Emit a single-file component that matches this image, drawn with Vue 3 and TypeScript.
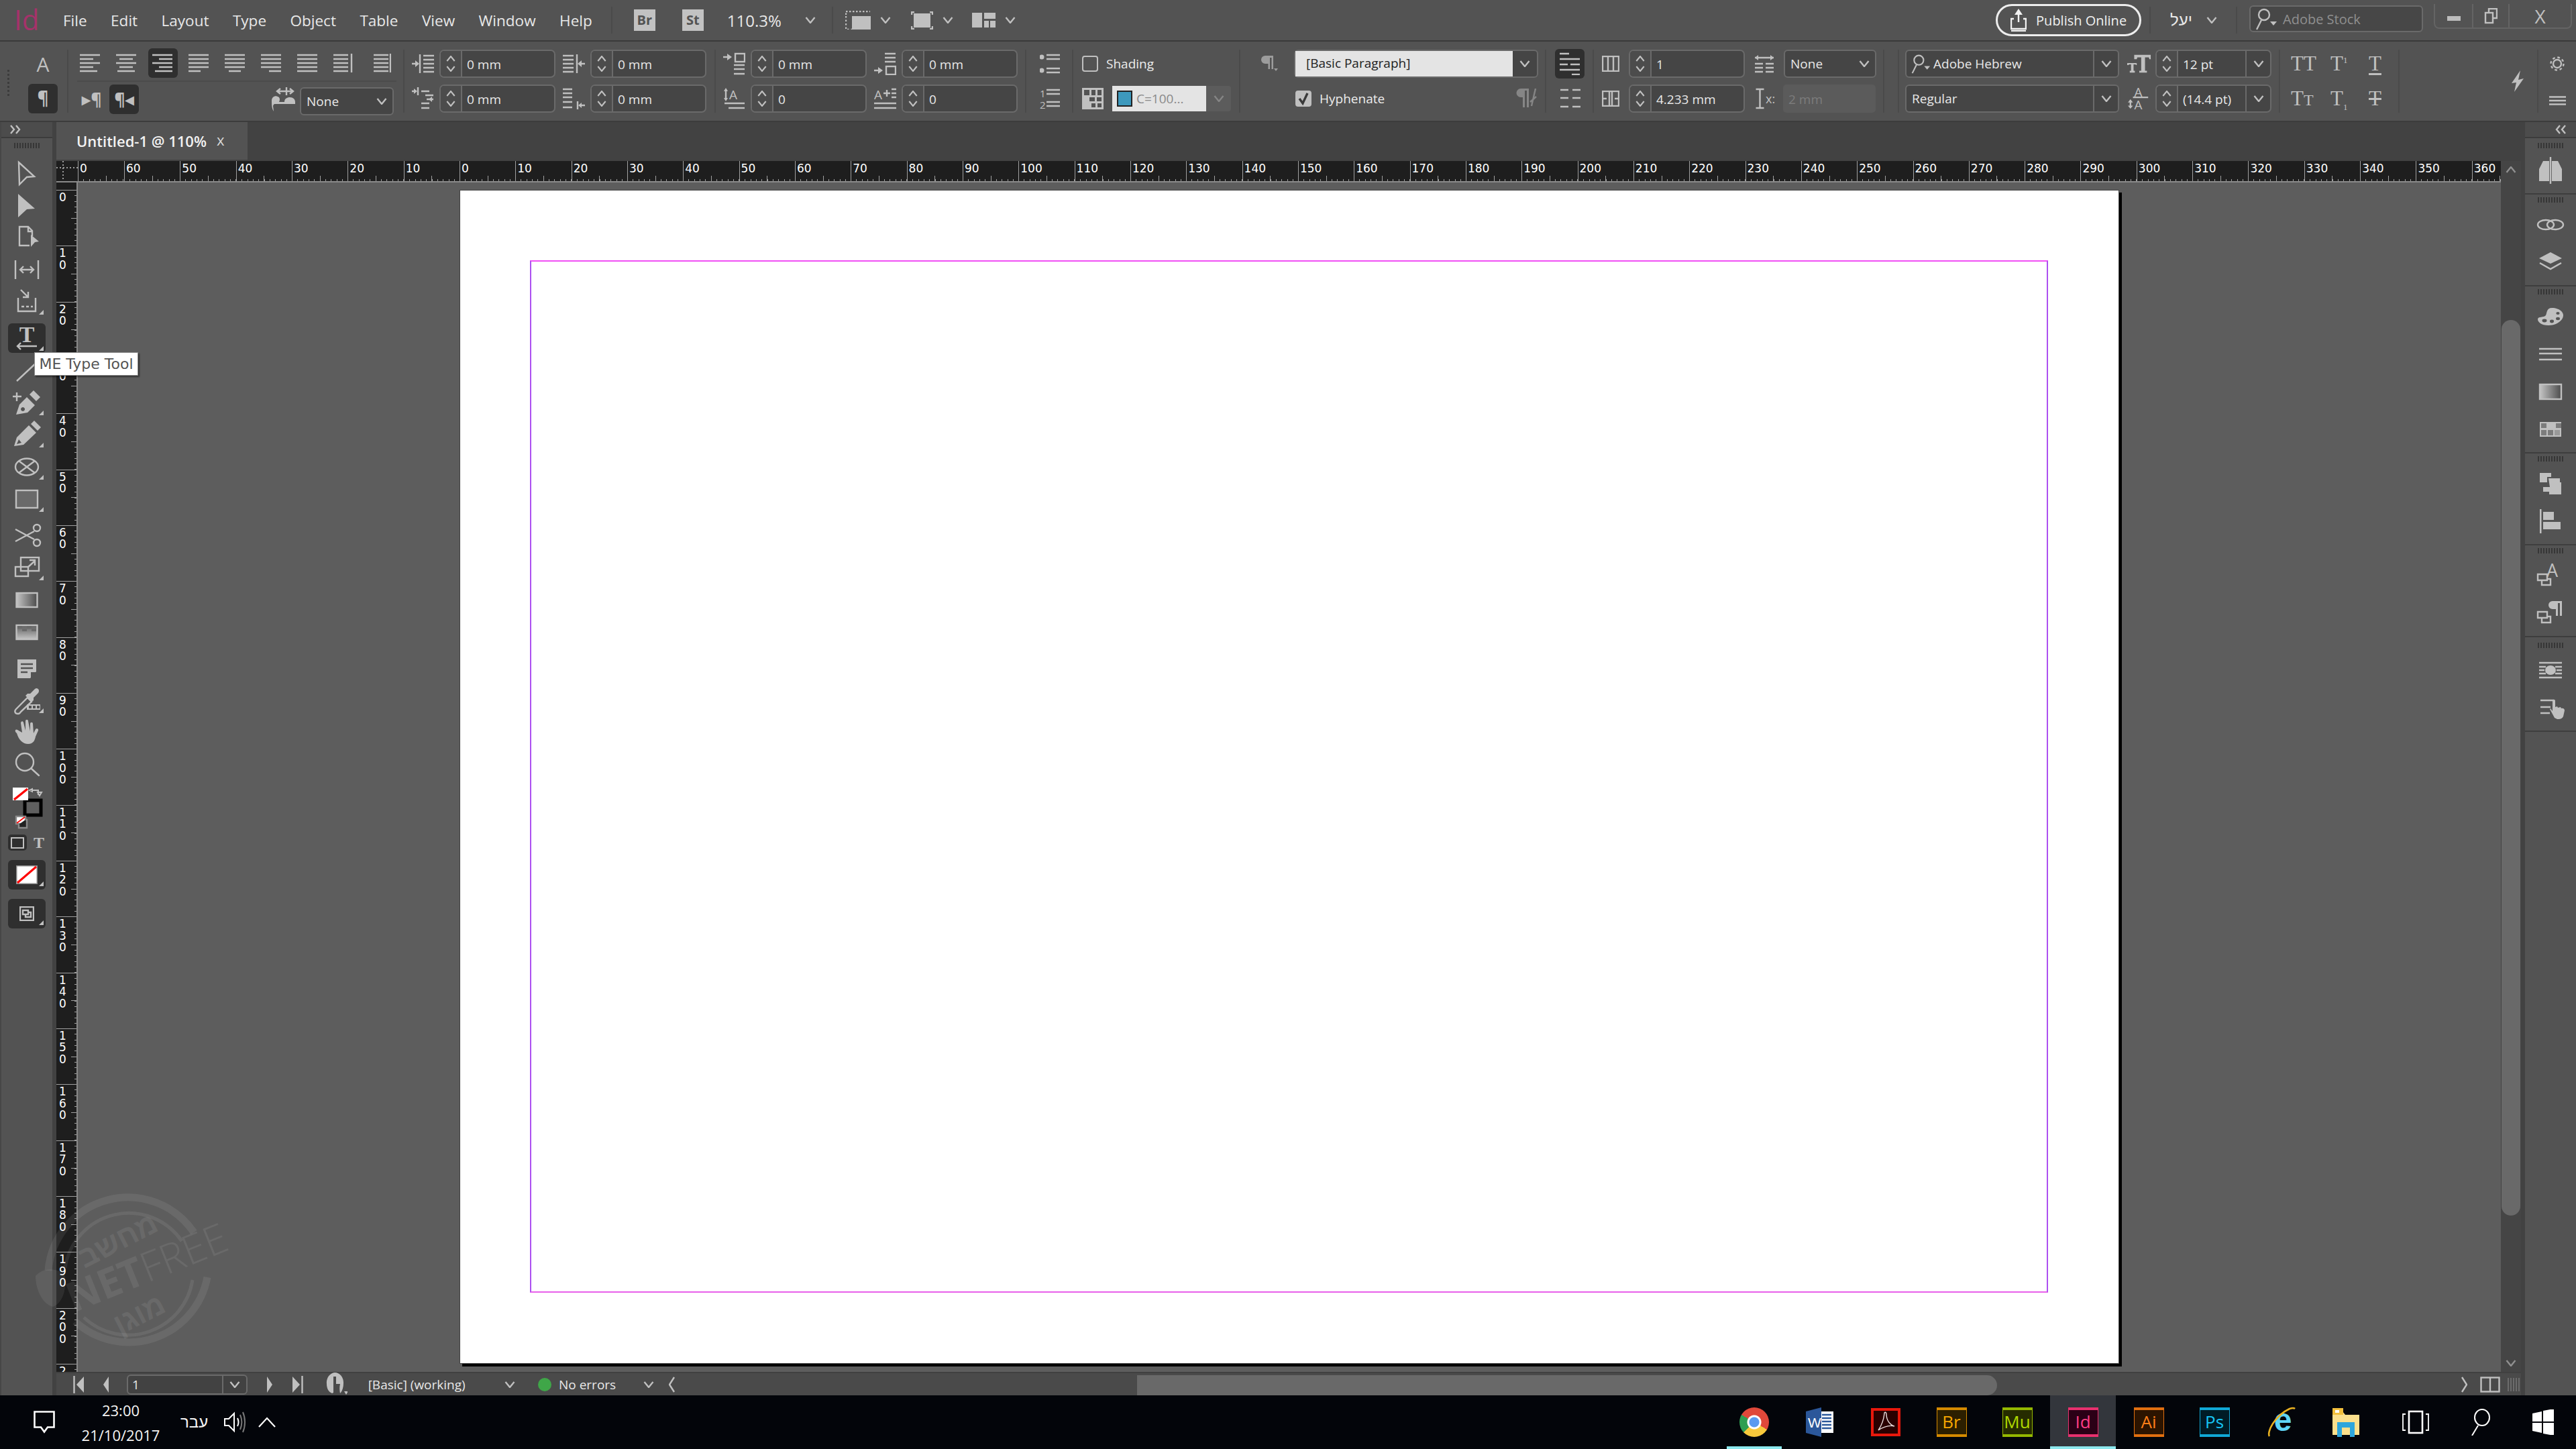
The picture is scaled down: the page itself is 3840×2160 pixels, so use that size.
<script setup lang="ts">
type Field = { icon: string; val: string; flip?: boolean; letterX?: number };
type Tool = { id: string; fly?: boolean; on?: boolean; gap?: boolean };

const menus = ["File", "Edit", "Layout", "Type", "Object", "Table", "View", "Window", "Help"];

const alignLines = [
  "M0 2h30M0 8h20M0 14h30M0 20h20M0 26h26",
  "M0 2h30M5 8h20M0 14h30M5 20h20M2 26h26",
  "M0 2h30M10 8h20M0 14h30M10 20h20M4 26h26",
  "M0 2h30M0 8h30M0 14h30M0 20h30M0 26h18",
  "M0 2h30M0 8h30M0 14h30M0 20h30M6 26h18",
  "M0 2h30M0 8h30M0 14h30M0 20h30M12 26h18",
  "M0 2h30M0 8h30M0 14h30M0 20h30M0 26h30",
  "M0 2h22M0 8h22M0 14h22M0 20h22M0 26h22M27 0v28",
  "M6 2h22M6 8h22M6 14h22M6 20h22M6 26h22M31 0v28",
];

const fieldsC: Field[] = [
  { icon: "ind-l", val: "0 mm" },
  { icon: "ind-l", val: "0 mm", flip: true },
  { icon: "ind-first", val: "0 mm" },
  { icon: "ind-last", val: "0 mm" },
];
const fieldsD: Field[] = [
  { icon: "sp-before", val: "0 mm" },
  { icon: "sp-after", val: "0 mm" },
  { icon: "dc-lines", val: "0", letterX: 9 },
  { icon: "dc-chars", val: "0", letterX: 0 },
];

const tools: Tool[] = [
  { id: "t-sel" },
  { id: "t-dir" },
  { id: "t-page" },
  { id: "t-gap" },
  { id: "t-coll", fly: true },
  { id: "t-type", fly: true, on: true, gap: true },
  { id: "t-line" },
  { id: "t-pen", fly: true },
  { id: "t-pencil", fly: true },
  { id: "t-frame", fly: true },
  { id: "t-rect", fly: true },
  { id: "t-sci", gap: true },
  { id: "t-free", fly: true },
  { id: "t-grad" },
  { id: "t-feather" },
  { id: "t-note", gap: true },
  { id: "t-drop", fly: true },
  { id: "t-hand" },
  { id: "t-zoom" },
];

const panelGroups = [
  ["r-pages"],
  ["r-links", "r-layers"],
  ["r-swatch", "r-stroke", "r-grad", "r-table"],
  ["r-path", "r-align"],
  ["r-cstyle", "r-pstyle"],
  ["r-wrap", "r-hand"],
];

const rulerNeg = [60, 50, 40, 30, 20, 10];
const rulerPos = Array.from({ length: 37 }, (_, i) => i * 10);
const rulerLeft = Array.from({ length: 22 }, (_, i) => i * 10);

const adobeApps = [
  { name: "Br", cls: "br" },
  { name: "Mu", cls: "mu" },
  { name: "Id", cls: "id" },
  { name: "Ai", cls: "ai" },
  { name: "Ps", cls: "ps" },
];
</script>

<template>
  <div class="app">
    <svg class="defs" aria-hidden="true">
      <defs>
        <linearGradient id="gr-h"><stop offset="0" stop-color="#c4c4c4" /><stop offset="1" stop-color="#4c4c4c" /></linearGradient>
        <linearGradient id="gr-v" x2="0" y2="1"><stop offset="0" stop-color="#5c5c5c" /><stop offset="1" stop-color="#c4c4c4" /></linearGradient>
      </defs>
      <symbol id="chev" viewBox="0 0 16 10"><path class="s" d="M1.5 1 8 9l6.5-8" /></symbol>
      <symbol id="chup" viewBox="0 0 16 10"><path class="s" d="M1.5 9 8 1l6.5 8" /></symbol>

      <symbol id="ind-l" viewBox="0 0 33 30"><path class="s" d="M12 1v28M17 3h16M17 9h16M17 15h16M17 21h16M17 27h16M0 15h6" /><path class="f" d="M5 10l6 5-6 5z" /></symbol>
      <symbol id="ind-first" viewBox="0 0 33 34"><path class="s" d="M9 0v12M0 6h4M14 6h12M20 12h12M22 18h10M14 24h12M14 31h12" /><path class="f" d="M3 2l5 4-5 4zM30 14v8l-5-4z" /></symbol>
      <symbol id="ind-last" viewBox="0 0 33 34"><path class="s" d="M0 3h14M0 9h14M0 15h14M0 22h14M0 30h14M22 21v12M27 27h6" /><path class="f" d="M28 23v8l-5-4z" /></symbol>
      <symbol id="sp-before" viewBox="0 0 33 34"><rect class="s" x="18" y="2" width="14" height="12" /><path class="s" d="M0 7h6M16 19h16M16 25h16M16 32h16" /><path class="f" d="M6 2l7 5-7 5z" /></symbol>
      <symbol id="sp-after" viewBox="0 0 33 34"><rect class="s" x="18" y="21" width="14" height="12" /><path class="s" d="M16 2h16M16 8h16M16 14h16M0 27h6" /><path class="f" d="M6 22l7 5-7 5z" /></symbol>
      <symbol id="dc-lines" viewBox="0 0 33 34"><path class="s" d="M4 3v16M2 24h30M8 31h24" /><path class="f" d="M1 6l3-5 3 5zM1 16h6l-3 5z" /></symbol>
      <symbol id="dc-chars" viewBox="0 0 33 34"><path class="s" d="M14 9h10M19 4v10M26 3h7M26 9h7M26 15h7M0 24h33M0 31h33" /></symbol>

      <symbol id="bullets" viewBox="0 0 30 30"><circle class="f" cx="3" cy="5" r="3.5" /><circle class="f" cx="3" cy="25" r="3.5" /><path class="s" d="M10 2h20M10 8h20M10 22h20M10 28h20" /></symbol>
      <symbol id="shade" viewBox="0 0 32 32"><path class="f" d="M0 0h32v32H0zM3 3v8h8V3zm11 0v8h6V3zm9 0v8h6V3zM11 14v6h8v-6zm11 0v6h7v-6zM14 23v6h6v-6zm9 0v6h6v-6z" fill-rule="evenodd" /></symbol>
      <symbol id="para-s" viewBox="0 0 27 24"><path class="f" d="M8 0h12v20h-2.500V3h-2.500v17h-2.500V12H8a6 6 0 0 1 0-12z" /><path class="f" d="M21 19h6l-3 4z" /></symbol>
      <symbol id="para-x" viewBox="0 0 33 30"><path class="f" d="M8 0h12v28h-3V3h-3v25h-3V13H8A6.500 6.500 0 0 1 8 0z" /><path class="s" d="M22 20l9-8M24 26l6-26" /></symbol>
      <symbol id="list-a" viewBox="0 0 30 34"><path class="s" d="M0 2h14M0 10h30M0 18h12M16 18h14M0 26h30M18 33h12" /></symbol>
      <symbol id="list-b" viewBox="0 0 30 30"><path class="s" d="M0 2h12M18 2h12M0 14h12M18 14h12M0 27h12M18 27h12" /></symbol>
      <symbol id="cols" viewBox="0 0 26 24"><rect class="s" x="1" y="1" width="24" height="22" /><path class="s" d="M9 1v22M17 1v22" /></symbol>
      <symbol id="gutter" viewBox="0 0 26 24"><rect class="s" x="1" y="1" width="24" height="22" /><path class="s" d="M11 1v22M15 1v22M1 12h6M19 12h6" /></symbol>
      <symbol id="bal" viewBox="0 0 30 28"><path class="s" d="M1 5h28M1 20h12M17 20h12M1 14h12M17 14h12M1 26h12M17 26h12" /><path class="f" d="M6 1v8l-5-4zM24 1v8l5-4z" /></symbol>
      <symbol id="mag" viewBox="0 0 34 34"><circle class="s" cx="14" cy="11" r="8" stroke-width="2" /><path class="s" d="M10 19 3 33" stroke-width="2" /><path class="f" d="M23 21h10l-5 6z" /></symbol>
      <symbol id="size" viewBox="0 0 38 28"><path class="f" d="M11 0h26v7h-2l-1-3h-6v21h3v3H19v-3h3V4h-6l-1 3h-4z" /><path class="f" d="M0 13h15v3h-1l-1-1h-3v10h2v3H4v-3h2V15H3l-1 1H0z" /></symbol>
      <symbol id="bolt" viewBox="0 0 20 32"><path class="f" d="M14 0 1 19l7-1-3 14L19 12l-8 2z" /></symbol>
      <symbol id="gear" viewBox="0 0 24 24"><circle class="s" cx="12" cy="12" r="6" stroke-width="4" /><circle class="s" cx="12" cy="12" r="9.500" stroke-width="3.500" stroke-dasharray="3.700 3.760" /></symbol>
      <symbol id="burger" viewBox="0 0 25 14"><path class="s" d="M0 1.500h25M0 7h25M0 12.500h25" stroke-width="2.600" /></symbol>

      <symbol id="scr" viewBox="0 0 38 28"><path class="s" stroke-dasharray="2.500 2.500" d="M1 6V1h36" /><path class="s" stroke-dasharray="2.500 3" d="M1 8v20h10" /><rect class="f" x="10" y="8" width="28" height="20" /></symbol>
      <symbol id="frame-m" viewBox="0 0 33 27"><path class="s" d="M5 1H1v4M28 1h4v4M5 26H1v-4M28 26h4v-4" stroke-width="1.800" /><rect class="f" x="4" y="3" width="25" height="21" /></symbol>
      <symbol id="arrange" viewBox="0 0 35 22"><path class="f" d="M0 0h15v22H0zM18 0h17v9H18zM18 12h7v10h-7zM27 12h8v10h-8z" /></symbol>
      <symbol id="upload" viewBox="0 0 24 34"><path class="s" d="M12 2v18M5 15h-4v15h22V15h-4" stroke-width="2" /><path class="f" d="M12 0l6 9H6z" /><path class="s" d="M1 33h22" /></symbol>
      <symbol id="restore" viewBox="0 0 20 24"><path class="s" d="M7 6V1h12v14h-5" stroke-width="3" /><rect class="s" x="2" y="7" width="11" height="15" stroke-width="3" /></symbol>

      <symbol id="first" viewBox="0 0 16 26"><path class="s" d="M1.500 0v26" stroke-width="3" /><path class="f" d="M16 1v24L5 13z" /></symbol>
      <symbol id="prev" viewBox="0 0 10 26"><path class="f" d="M9 1v24L1 13z" /></symbol>
      <symbol id="preflight" viewBox="0 0 32 36"><path class="f" fill-rule="evenodd" d="M13 0a13 15 0 0 1 13 16c0 7-2 12-5 15-1-5-1-10 0-14H15V6h-4v24l-2 1c-5-2-8-7-8-14A13 15 0 0 1 13 0z" /><path class="f" d="M27 28h6l-3 5z" /></symbol>
      <symbol id="split" viewBox="0 0 30 24"><rect class="s" x="1.500" y="1.500" width="27" height="21" stroke-width="3" /><path class="s" d="M15 1v22" stroke-width="2.400" /></symbol>

      <symbol id="t-sel" viewBox="0 0 48 48"><path class="s" d="M12 8l23 21-11 1-11 11z" /></symbol>
      <symbol id="t-dir" viewBox="0 0 48 48"><path class="f" d="M11 7l25 22-12 1-13 12z" /></symbol>
      <symbol id="t-page" viewBox="0 0 48 48"><path class="s" d="M32 22v-8l-6-6H13v28h15M26 8v7h6" /><path class="f" d="M30 20l12 10-6 1-6 7z" /></symbol>
      <symbol id="t-gap" viewBox="0 0 48 48"><path class="s" d="M7 10v28M41 10v28" stroke-width="4" /><path class="s" d="M14 24h20M19 19l-5 5 5 5M29 19l5 5-5 5" /></symbol>
      <symbol id="t-coll" viewBox="0 0 48 48"><path class="s" d="M11 18v20h26V18" stroke-width="3" /><path class="s" d="M16 31h4M23 31h4M30 31h3M15 6l10 10M26 9v8h-8" /></symbol>
      <symbol id="t-type" viewBox="0 0 48 48"><path class="s" d="M10 36h29M15 31l-5 5 5 5" /></symbol>
      <symbol id="t-line" viewBox="0 0 48 48"><path class="s" d="M9 40 40 11" stroke-width="3" /></symbol>
      <symbol id="t-pen" viewBox="0 0 48 48"><path class="s" d="M3 15h13M9 9v13" stroke-width="3.400" /><g transform="translate(-4 0)"><path class="f" fill-rule="evenodd" d="M12 42l5-15 11-11 12 12-11 11zM22 31a3 3 0 1 0 0.100 0z" /><path class="f" d="M32 12l6-6 10 10-6 6z" /></g></symbol>
      <symbol id="t-pencil" viewBox="0 0 48 48"><g transform="translate(-4 0)"><path class="f" fill-rule="evenodd" d="M9 41l4-13 18-18 11 11-19 18zM13 38l7-2-4-5z" /><path class="f" d="M34 8l5-5 10 10-5 5z" /></g></symbol>
      <symbol id="t-frame" viewBox="0 0 48 48"><ellipse class="s" cx="24" cy="24" rx="17" ry="12.500" /><path class="s" d="M12 15l24 18M36 15 12 33" /></symbol>
      <symbol id="t-rect" viewBox="0 0 48 48"><rect x="8" y="11" width="32" height="26" fill="#6a6a6a" stroke="#c0c0c0" stroke-width="2.400" /></symbol>
      <symbol id="t-sci" viewBox="0 0 48 48"><circle class="s" cx="39" cy="13" r="5" /><circle class="s" cx="39" cy="35" r="5" /><path class="s" d="M7 15l28 15M7 33l28-15" stroke-width="3.600" /></symbol>
      <symbol id="t-free" viewBox="0 0 48 48"><rect class="s" x="7" y="23" width="19" height="14" /><rect class="s" x="15" y="9" width="27" height="20" /><path class="s" d="M25 24l10-9M28 13h8v8" /></symbol>
      <symbol id="t-grad" viewBox="0 0 48 48"><rect x="8.500" y="14" width="31" height="21" fill="url(#gr-h)" stroke="#c0c0c0" stroke-width="2.400" /></symbol>
      <symbol id="t-feather" viewBox="0 0 48 48"><rect x="8.500" y="14" width="31" height="21" fill="url(#gr-v)" stroke="#c0c0c0" stroke-width="2.400" /><path fill="#6a6a6a" d="M10 15h7v4h-7zM24 15h7v4h-7zM17 19h7v4h-7zM31 19h7v4h-7z" /></symbol>
      <symbol id="t-note" viewBox="0 0 48 48"><path class="f" d="M10 11h28v18l-9 10H10z" /><path d="M15 18h18M15 24h18M15 30h10" stroke="#535353" stroke-width="2.400" /><path fill="#535353" d="M30 30h8l-8 9z" /></symbol>
      <symbol id="t-drop" viewBox="0 0 48 48"><path class="s" d="M11 44c-5 0-6-4-3-7l17-17 6 6-16 15c-1 2-2 3-4 3z" /><path class="f" d="M25 14l4 0 7-7c4-3 8 2 5 6l-7 7v4l-3 2-9-9z" /><path class="f" fill-rule="evenodd" d="M24 30h20v8H24zM27 32v4h4v-4zm6 0v4h4v-4zm6 0v4h4v-4z" /></symbol>
      <symbol id="t-hand" viewBox="0 0 48 48"><g transform="translate(-3 0)"><path class="f" d="M12 25c3 10 9 16 17 16 8 0 10-6 11-11l4-9c1-3-3-4-4-2l-3 6-1-14c0-3-4-3-4 0v11l-3-15c0-3-4-3-4 0v14L22 9c-1-3-4-2-4 1l2 14-7-4c-3-2-5 2-1 5z" /></g></symbol>
      <symbol id="t-zoom" viewBox="0 0 48 48"><circle class="s" cx="21" cy="20" r="13" stroke-width="3" /><path class="s" d="M31 30l11 10" stroke-width="4.600" stroke-linecap="round" /></symbol>

      <symbol id="r-pages" viewBox="0 0 44 40"><path class="f" d="M5 36V18L11 6h9v30zM24 36V6h9l6 12v18z" /><path class="s" d="M22 0v40" stroke-width="1.500" /></symbol>
      <symbol id="r-links" viewBox="0 0 44 40"><ellipse class="s" cx="15" cy="20" rx="12" ry="7" stroke-width="3.400" /><ellipse class="s" cx="29" cy="20" rx="12" ry="7" stroke-width="3.400" /></symbol>
      <symbol id="r-layers" viewBox="0 0 44 40"><path class="f" d="M22 5l17 9-17 8-17-8z" /><path class="s" d="M6 21l16 9 16-9" stroke-width="3.400" /></symbol>
      <symbol id="r-swatch" viewBox="0 0 44 40"><path class="f" d="M24 7c10 0 17 5 17 11 0 7-9 15-22 15C8 33 3 28 3 24c0-5 9-2 12-6 2-4 1-11 9-11z" /><g fill="#535353"><ellipse cx="33" cy="15" rx="2.600" ry="2" /><ellipse cx="33" cy="23" rx="3" ry="2.200" /><ellipse cx="24" cy="27" rx="3" ry="2.400" /><ellipse cx="13" cy="26" rx="3.500" ry="2.400" /></g></symbol>
      <symbol id="r-stroke" viewBox="0 0 44 40"><path class="s" d="M5 12h34" stroke-width="1.400" /><path class="s" d="M5 19h34" stroke-width="3" /><path class="s" d="M5 28h34" stroke-width="6" /></symbol>
      <symbol id="r-grad" viewBox="0 0 44 40"><rect x="6" y="9" width="32" height="22" fill="url(#gr-h)" stroke="#c0c0c0" stroke-width="2.400" /></symbol>
      <symbol id="r-table" viewBox="0 0 44 40"><path class="f" d="M6 9h32v22H6z" /><path fill="#7c7c7c" d="M8 11h8v7H8zM30 11h8v7h-8zM8 21h8v8H8zM18 21h8v8h-8z" /><path fill="#9a9a9a" d="M28 21h8v8h-8z" /></symbol>
      <symbol id="r-path" viewBox="0 0 44 40"><path class="f" d="M7 4h17v6h-6v8H7zM20 12h17v6h2v18H21v-4H12v-7h10z" transform="translate(-1 0)" /></symbol>
      <symbol id="r-align" viewBox="0 0 44 40"><path class="f" d="M6 2h2.500v36H6zM11 6h16v12H11zM11 21h26v11H11z" /></symbol>
      <symbol id="r-cstyle" viewBox="0 0 44 40"><path class="s" d="M3 18h14v9H3zM9 27v7h13v-9h-5" stroke-width="2.200" /></symbol>
      <symbol id="r-pstyle" viewBox="0 0 44 40"><path class="f" d="M25 2h14v22h-3V5h-3v19h-3V14h-5a6 6 0 0 1 0-12z" /><path class="s" d="M3 18h14v9H3zM9 27v7h13v-9h-5" stroke-width="2.200" /></symbol>
      <symbol id="r-wrap" viewBox="0 0 44 40"><ellipse class="f" cx="22" cy="20" rx="8" ry="7" /><path class="s" d="M5 9h34M5 31h34M5 15h10M29 15h10M5 20h8M31 20h8M5 25h10M29 25h10" stroke-width="1.500" /></symbol>
      <symbol id="r-hand" viewBox="0 0 44 40"><path class="s" d="M7 9h20M7 19h15M7 28h14" stroke-width="4.400" /><path class="f" d="M21 22l7 13c4 3 11 3 13-2l2-9c0-3-3-4-5-3l-1-2-4 1-1-2-3 1V10c0-3-4-3-4 0v15l-3-4z" /></symbol>

      <symbol id="swatch-red" viewBox="0 0 32 28"><rect width="32" height="28" fill="#fff" stroke="#8a8a8a" stroke-width="3" /><path d="M2 26 30 2" stroke="#f00" stroke-width="3" /></symbol>
      <symbol id="preview" viewBox="0 0 22 22"><rect class="s" x="1" y="1" width="20" height="20" /><path class="s" d="M5 6h8v6H5zM9 12v4h8v-7h-4" stroke-width="1.800" /></symbol>
    </svg>

    <header class="titlebar">
      <span class="id-logo">Id</span>
      <nav class="menu"><span v-for="m in menus" :key="m">{{ m }}</span></nav>
      <i class="vsep vs-a"></i>
      <span class="bridge">Br</span>
      <span class="bridge st">St</span>
      <span class="zoom">110.3%</span>
      <svg class="ic chev ch-zoom"><use href="#chev" /></svg>
      <i class="vsep vs-b"></i>
      <svg class="ic scr" width="38" height="28"><use href="#scr" /></svg>
      <svg class="ic chev ch-tb"><use href="#chev" /></svg>
      <svg class="ic frm" width="33" height="27"><use href="#frame-m" /></svg>
      <svg class="ic chev ch-tb"><use href="#chev" /></svg>
      <svg class="ic arr" width="35" height="22"><use href="#arrange" /></svg>
      <svg class="ic chev ch-tb"><use href="#chev" /></svg>

      <div class="title-right">
        <div class="publish">
          <svg class="ic-w" width="24" height="34"><use href="#upload" /></svg>
          <span>Publish Online</span>
        </div>
        <i class="vsep vs-c"></i>
        <span class="user">יעל</span>
        <svg class="ic chev ch-user"><use href="#chev" /></svg>
        <i class="vsep vs-d"></i>
        <div class="stock">
          <svg class="ic" width="34" height="34"><use href="#mag" /></svg>
          <span>Adobe Stock</span>
        </div>
        <div class="winbtns">
          <span class="wb w-min"><i></i></span>
          <span class="wb w-res"><svg class="ic" width="20" height="24"><use href="#restore" /></svg></span>
          <span class="wb w-close">X</span>
        </div>
      </div>
    </header>

    <section class="ctrl">
      <div class="sec sec-a">
        <i class="grip-v"></i>
        <div class="col-a">
          <div class="row"><span class="big-a">A</span></div>
          <div class="row"><span class="para-btn">¶</span></div>
        </div>
      </div>

      <div class="sec sec-b">
        <div class="row">
          <span v-for="(d, i) in alignLines" :key="i" class="al" :class="{ on: i === 2 }">
            <svg class="ic" width="32" height="28" viewBox="0 0 32 28"><path class="s" :d="d" /></svg>
          </span>
        </div>
        <div class="row row-b">
          <span class="dir">▸¶</span>
          <span class="dir on">¶◂</span>
          <svg class="ic kash" width="40" height="36" viewBox="0 0 40 36">
            <path class="s" d="M10 6h24M15 2l-5 4 5 4M29 2l5 4-5 4M24 0v12" stroke-width="1.800" />
            <path class="f" d="M2 20c0-5 5-8 9-6 3 1 4 4 2 8h8c0-5 4-7 8-7 5 0 8 3 8 7v3H11c-4 0-6-1-7 3l1 8c-3-4-3-11-3-16z" />
          </svg>
          <div class="select sel-none">
            <span>None</span>
            <svg class="ic chev"><use href="#chev" /></svg>
          </div>
        </div>
      </div>

      <div class="sec fields sec-c">
        <div v-for="(f, i) in fieldsC" :key="i" class="fld">
          <svg class="ic fi" :class="{ flip: f.flip }" width="33" height="34"><use :href="'#' + f.icon" /></svg>
          <div class="spin">
            <span class="arrows"><svg class="ic chev"><use href="#chup" /></svg><svg class="ic chev"><use href="#chev" /></svg></span>
            <span class="val">{{ f.val }}</span>
          </div>
        </div>
      </div>

      <div class="sec fields sec-d">
        <div v-for="(f, i) in fieldsD" :key="i" class="fld">
          <svg class="ic fi" width="33" height="34" viewBox="0 0 33 34">
            <use :href="'#' + f.icon" width="33" height="34" />
            <text v-if="f.letterX !== undefined" class="tx" :x="f.letterX" y="18" font-size="19">A</text>
          </svg>
          <div class="spin">
            <span class="arrows"><svg class="ic chev"><use href="#chup" /></svg><svg class="ic chev"><use href="#chev" /></svg></span>
            <span class="val">{{ f.val }}</span>
          </div>
        </div>
      </div>

      <div class="sec sec-e">
        <div class="row"><svg class="ic" width="30" height="30"><use href="#bullets" /></svg></div>
        <div class="row">
          <svg class="ic" width="30" height="32" viewBox="0 0 30 32">
            <text class="tx" x="0" y="14" font-size="15">1</text>
            <text class="tx" x="0" y="31" font-size="15">2</text>
            <path class="s" d="M10 3h20M10 9h20M10 21h20M10 27h20" />
          </svg>
        </div>
      </div>

      <div class="sec sec-f">
        <div class="row">
          <i class="check"></i>
          <span class="lbl">Shading</span>
        </div>
        <div class="row">
          <svg class="ic" width="32" height="32"><use href="#shade" /></svg>
          <div class="shade-field">
            <i></i>
            <span>C=100...</span>
          </div>
          <span class="shade-drop"><svg class="ic chev"><use href="#chev" /></svg></span>
        </div>
      </div>

      <div class="sec sec-g">
        <div class="row">
          <svg class="ic para-s" width="27" height="24"><use href="#para-s" /></svg>
          <div class="select sel-style">
            <span class="style-name">[Basic Paragraph]</span>
            <span class="style-drop"><svg class="ic chev"><use href="#chev" /></svg></span>
          </div>
        </div>
        <div class="row row-hy">
          <i class="check checked">
            <svg width="18" height="20" viewBox="0 0 18 20"><path d="M3 10l5 7 7-15" fill="none" stroke="#3a3a3a" stroke-width="3.400" /></svg>
          </i>
          <span class="lbl">Hyphenate</span>
          <svg class="ic dim para-x" width="33" height="30"><use href="#para-x" /></svg>
        </div>
      </div>

      <div class="sec sec-h">
        <div class="row"><span class="list-on"><svg class="ic" width="30" height="34"><use href="#list-a" /></svg></span></div>
        <div class="row"><svg class="ic" width="30" height="30"><use href="#list-b" /></svg></div>
      </div>

      <div class="sec sec-i">
        <div class="row">
          <svg class="ic" width="26" height="24"><use href="#cols" /></svg>
          <div class="spin spin-i">
            <span class="arrows"><svg class="ic chev"><use href="#chup" /></svg><svg class="ic chev"><use href="#chev" /></svg></span>
            <span class="val">1</span>
          </div>
          <svg class="ic i-mid" width="30" height="28"><use href="#bal" /></svg>
          <div class="select sel-bal">
            <span>None</span>
            <svg class="ic chev"><use href="#chev" /></svg>
          </div>
        </div>
        <div class="row">
          <svg class="ic" width="26" height="24"><use href="#gutter" /></svg>
          <div class="spin spin-i">
            <span class="arrows"><svg class="ic chev"><use href="#chup" /></svg><svg class="ic chev"><use href="#chev" /></svg></span>
            <span class="val">4.233 mm</span>
          </div>
          <span class="span-x">
            <svg class="ic" width="17" height="32" viewBox="0 0 16 32"><path class="s" d="M2 2h12M2 30h12M8 2v28" /></svg>
            <b>x:</b>
          </span>
          <span class="disabled">2 mm</span>
        </div>
      </div>

      <div class="sec sec-gap"></div>

      <div class="sec sec-j">
        <div class="row">
          <div class="select sel-font">
            <svg class="ic" width="30" height="34"><use href="#mag" /></svg>
            <span class="font-name">Adobe Hebrew</span>
            <span class="sel-arrow"><svg class="ic chev"><use href="#chev" /></svg></span>
          </div>
          <svg class="ic j-ic" width="36" height="28"><use href="#size" /></svg>
          <div class="spin spin-size">
            <span class="arrows"><svg class="ic chev"><use href="#chup" /></svg><svg class="ic chev"><use href="#chev" /></svg></span>
            <span class="val">12 pt</span>
            <span class="sel-arrow"><svg class="ic chev"><use href="#chev" /></svg></span>
          </div>
        </div>
        <div class="row">
          <div class="select sel-font">
            <span class="font-name regular">Regular</span>
            <span class="sel-arrow"><svg class="ic chev"><use href="#chev" /></svg></span>
          </div>
          <svg class="ic j-ic" width="36" height="34" viewBox="0 0 38 36">
            <text class="tx" x="11" y="15" font-size="20">A</text>
            <text class="tx" x="11" y="35" font-size="20">A</text>
            <path class="s" d="M9 16h24M5 21v10" />
            <path class="f" d="M1 24l4-5 4 5zM1 29l4 5 4-5z" />
          </svg>
          <div class="spin spin-size">
            <span class="arrows"><svg class="ic chev"><use href="#chup" /></svg><svg class="ic chev"><use href="#chev" /></svg></span>
            <span class="val">(14.4 pt)</span>
            <span class="sel-arrow"><svg class="ic chev"><use href="#chev" /></svg></span>
          </div>
        </div>
      </div>

      <div class="sec sec-k">
        <span class="tt">TT</span>
        <span class="tt">T<sup>1</sup></span>
        <span class="tt under">T</span>
        <span class="tt">T<small>T</small></span>
        <span class="tt">T<sub>1</sub></span>
        <span class="tt strike">T</span>
      </div>

      <div class="sec sec-l"><svg class="ic" width="20" height="32"><use href="#bolt" /></svg></div>

      <div class="sec sec-m">
        <svg class="ic" width="24" height="24"><use href="#gear" /></svg>
        <svg class="ic" width="25" height="14"><use href="#burger" /></svg>
      </div>
    </section>

    <main class="main">
      <aside class="tools">
        <div class="collapse">
          <svg width="18" height="16" viewBox="0 0 18 16" class="ic"><path class="s" d="M2 2l5 6-5 6M10 2l5 6-5 6" stroke-width="1.600" /></svg>
        </div>
        <i class="grip"></i>
        <div class="tool-list">
          <span v-for="t in tools" :key="t.id" class="tool" :class="{ fly: t.fly, on: t.on, gap: t.gap }">
            <svg class="ic" width="48" height="48" viewBox="0 0 48 48">
              <use :href="'#' + t.id" width="48" height="48" />
              <text v-if="t.id === 't-type'" class="tb" x="24" y="30" text-anchor="middle" font-size="34">T</text>
            </svg>
          </span>
        </div>
        <svg class="fillstroke" width="48" height="62" viewBox="0 0 48 62">
          <rect x="21" y="19" width="24" height="22" fill="#5f5f5f" stroke="#000" stroke-width="5" />
          <rect x="3" y="0" width="23" height="19" fill="#fff" />
          <path d="M5 18 25 2" stroke="#f00" stroke-width="3.500" />
          <path d="M32 4h9v7M40 7h6l-3 5zM32 2v4l-4-2z" fill="none" stroke="#c0c0c0" stroke-width="2" />
          <rect x="8" y="43" width="14" height="11" fill="#fff" stroke="#8a8a8a" stroke-width="2.400" />
          <path d="M9 53 21 44" stroke="#f00" stroke-width="1.600" />
          <path d="M22 48h2v12h-12v-5" fill="#222" stroke="#8a8a8a" stroke-width="2.400" />
        </svg>
        <div class="mode-row">
          <span class="mode"><i></i></span>
          <span class="mode-t">T</span>
        </div>
        <span class="tool-box fly"><svg width="32" height="28"><use href="#swatch-red" /></svg></span>
        <span class="tool-box fly"><svg class="ic" width="22" height="22"><use href="#preview" /></svg></span>
      </aside>

      <div class="work">
        <div class="tabs">
          <div class="tab">
            <span>Untitled-1 @ 110%</span>
            <em>x</em>
          </div>
        </div>

        <div class="work-row">
          <div class="doc">
            <div class="ruler-top">
              <div class="corner"></div>
              <span class="rt rt-first">0</span>
              <span v-for="n in rulerNeg" :key="'n' + n" class="rt">{{ n }}</span>
              <span v-for="n in rulerPos" :key="'p' + n" class="rt">{{ n }}</span>
            </div>
            <div class="doc-body">
              <div class="ruler-left">
                <div class="rl-top"></div>
                <span v-for="n in rulerLeft" :key="n" class="rl"><b>{{ n }}</b></span>
              </div>
              <div class="canvas">
                <div class="page">
                  <div class="margins"></div>
                </div>
              </div>
            </div>
          </div>
          <div class="vscroll">
            <svg class="ic-dim chev"><use href="#chup" /></svg>
            <div class="thumb"></div>
            <svg class="ic-dim chev down"><use href="#chev" /></svg>
          </div>
        </div>

        <footer class="status">
          <svg class="ic" width="16" height="26"><use href="#first" /></svg>
          <svg class="ic st-prev" width="10" height="26"><use href="#prev" /></svg>
          <div class="page-field">
            <span>1</span>
            <b><svg class="ic chev"><use href="#chev" /></svg></b>
          </div>
          <svg class="ic flip st-next" width="10" height="26"><use href="#prev" /></svg>
          <svg class="ic flip st-last" width="16" height="26"><use href="#first" /></svg>
          <svg class="ic st-pf" width="32" height="36"><use href="#preflight" /></svg>
          <span class="st-prof">[Basic] (working)</span>
          <svg class="ic chev st-ch1"><use href="#chev" /></svg>
          <i class="dot"></i>
          <span class="st-err">No errors</span>
          <svg class="ic chev st-ch2"><use href="#chev" /></svg>
          <svg class="ic st-left" width="9" height="24" viewBox="0 0 9 24"><path class="s" d="M8 1 1 12l7 11" stroke-width="1.600" /></svg>
          <div class="hthumb"></div>
          <svg class="ic flip st-right" width="9" height="24" viewBox="0 0 9 24"><path class="s" d="M8 1 1 12l7 11" stroke-width="1.600" /></svg>
          <svg class="ic st-split" width="30" height="24"><use href="#split" /></svg>
          <i class="st-grip"></i>
        </footer>
      </div>

      <aside class="rpanel">
        <div class="collapse right">
          <svg width="18" height="16" viewBox="0 0 18 16" class="ic"><path class="s" d="M8 2 3 8l5 6M16 2l-5 6 5 6" stroke-width="1.600" /></svg>
        </div>
        <div v-for="(g, i) in panelGroups" :key="i" class="rp-sec" :class="{ first: i === 0, last: i === 5 }">
          <i class="grip"></i>
          <span v-for="id in g" :key="id" class="rp-ic">
            <svg class="ic" width="44" height="40" viewBox="0 0 44 40">
              <use :href="'#' + id" width="44" height="40" />
              <text v-if="id === 'r-cstyle'" class="tx" x="16" y="22" font-size="27">A</text>
            </svg>
          </span>
        </div>
      </aside>
    </main>

    <footer class="taskbar">
      <svg class="tb-note" width="32" height="34" viewBox="0 0 32 34"><path d="M1.500 1.500h29v23H21l-5 7-5-7H1.500z" fill="none" stroke="#fff" stroke-width="2.600" /></svg>
      <div class="clock">
        <span>23:00</span>
        <span>21/10/2017</span>
      </div>
      <span class="lang">עבר</span>
      <svg class="tb-vol" width="32" height="36" viewBox="0 0 32 36">
        <path d="M1 13h6l8-8v26l-8-8H1z" fill="none" stroke="#fff" stroke-width="2" />
        <path d="M20 12c2 4 2 8 0 12" fill="none" stroke="#fff" stroke-width="2" />
        <path d="M24 7c3 7 3 15 0 22M28 3c4 9 4 21 0 30" fill="none" stroke="#777" stroke-width="2" />
      </svg>
      <svg class="tb-caret" width="26" height="16" viewBox="0 0 26 16"><path d="M1 15 13 2l12 13" fill="none" stroke="#fff" stroke-width="2.200" /></svg>

      <div class="tb-apps">
        <span class="app-cell used"><i class="chrome"></i></span>
        <span class="app-cell">
          <svg width="42" height="44" viewBox="0 0 42 44"><path d="M20 6h21v32H20z" fill="#fff" /><path d="M24 11h14M24 16h14M24 21h14M24 26h14M24 31h14" stroke="#2b579a" stroke-width="2.400" /><path d="M0 6 23 0v44L0 38z" fill="#2b579a" /><text class="w-txt" x="3" y="30" font-size="21">W</text></svg>
        </span>
        <span class="app-cell">
          <svg width="44" height="42" viewBox="0 0 44 42"><rect x="2" y="2" width="40" height="38" fill="#2a0000" stroke="#e8180c" stroke-width="4" /><path d="M11 33c4-6 8-15 9-25 0-3 3-2 3 1 0 9 5 16 12 18-8-2-15 0-24 6z" fill="none" stroke="#e9dede" stroke-width="1.400" /></svg>
        </span>
        <span v-for="a in adobeApps" :key="a.name" class="app-cell" :class="{ active: a.name === 'Id', used: a.name === 'Id' }">
          <span class="adobe" :class="a.cls">{{ a.name }}</span>
        </span>
        <span class="app-cell nudge-ie">
          <svg width="46" height="46" viewBox="0 0 46 46">
            <text class="ie-txt" x="23" y="36" text-anchor="middle" font-size="48">e</text>
            <path d="M3 44C-1 38 10 14 33 3c3-1 6-2 8 0" fill="none" stroke="#e8b020" stroke-width="2.600" />
          </svg>
        </span>
        <span class="app-cell">
          <svg width="44" height="44" viewBox="0 0 44 44"><path d="M2 6h15l4 5h21v30H2z" fill="#fce08c" /><path d="M2 1h16v10H2z" fill="#f2bf3c" /><path d="M6 4h6v4H6z" fill="#fff" /><path d="M9 44V22h26v22h-7V30H16v14z" fill="#2ea6dc" /></svg>
        </span>
        <span class="app-cell nudge-tv">
          <svg width="40" height="36" viewBox="0 0 40 36"><rect x="10" y="2" width="20" height="32" fill="none" stroke="#fff" stroke-width="2.600" /><path d="M5 6H1v24h4M35 6h4v24h-4" fill="none" stroke="#fff" stroke-width="1.800" /></svg>
        </span>
        <span class="app-cell nudge-se">
          <svg width="30" height="40" viewBox="0 0 30 40"><ellipse cx="18" cy="13" rx="11" ry="12" fill="none" stroke="#fff" stroke-width="2" /><path d="M12 25 3 40" stroke="#fff" stroke-width="2" /></svg>
        </span>
        <span class="app-cell">
          <svg width="32" height="38" viewBox="0 0 32 38"><path d="M0 6l14-3v15H0zM16 2l16-3v19H16zM0 20h14v15L0 32zM16 20h16v19l-16-3z" fill="#fff" /></svg>
        </span>
      </div>
    </footer>

    <div class="tooltip">ME Type Tool</div>

    <svg class="stamp" width="300" height="260" viewBox="0 0 300 260" aria-hidden="true">
      <g fill="none" stroke="#fff" opacity="0.075">
        <path d="M27 122A119 119 0 0 1 244 65" stroke-width="11" />
        <path d="M52 118A96 96 0 0 1 226 78" stroke-width="5" />
        <path d="M264 132A119 119 0 0 1 67 198" stroke-width="11" />
        <path d="M242 136A97 97 0 0 1 80 192" stroke-width="5" />
      </g>
      <g fill="#fff" opacity="0.075">
        <text class="stamp-he" x="130" y="92" text-anchor="middle" font-size="44" transform="rotate(-27 130 76)">מחשב</text>
        <text class="stamp-main" x="174" y="139" text-anchor="middle" font-size="61" transform="rotate(-22 174 118)"><tspan font-weight="700">NET</tspan><tspan font-weight="300">FREE</tspan></text>
        <text class="stamp-he" x="162" y="202" text-anchor="middle" font-size="44" transform="rotate(-27 162 186)">מוגן</text>
      </g>
      <path d="M8 130c12-14 36-12 44 0 2 22-4 40-18 46C18 172 8 150 8 130z" fill="#fff" opacity="0.075" />
    </svg>
  </div>
</template>

<style>
html,
body {
  margin: 0;
  background: #535353;
}
</style>

<style scoped>
.app {
  position: relative;
  width: 3840px;
  height: 2160px;
  display: flex;
  flex-direction: column;
  overflow: hidden;
  background: #535353;
  color: #e8e8e8;
  font-family: "Open Sans", "Liberation Sans", sans-serif;
  font-size: 19px;
}
.defs {
  display: block;
  width: 0;
  height: 0;
}
.s {
  fill: none;
  stroke: currentColor;
  stroke-width: 2.4;
}
.f {
  fill: currentColor;
  stroke: none;
}
.tx {
  fill: currentColor;
  font-family: "Open Sans", sans-serif;
}
.tb {
  fill: currentColor;
  font-family: "Liberation Serif", serif;
  font-weight: 700;
}
.ic {
  flex: none;
  color: #c0c0c0;
}
.ic.dim {
  color: #868686;
}
.ic-w {
  flex: none;
  color: #f2f2f2;
}
.ic-dim {
  flex: none;
  color: #909090;
}
.flip {
  transform: scaleX(-1);
}
.chev {
  width: 16px;
  height: 10px;
}
.vsep {
  flex: none;
  width: 2px;
  height: 40px;
  background: #4a4a4a;
}

/* title bar */
.titlebar {
  flex: none;
  height: 60px;
  display: flex;
  align-items: center;
  padding-left: 21px;
  box-sizing: border-box;
}
.id-logo {
  width: 50px;
  margin-top: -2px;
  color: #a5326a;
  font-size: 42px;
  font-weight: 400;
  line-height: 1;
}
.menu {
  display: flex;
  gap: 35.5px;
  margin-left: 23px;
  font-size: 22.5px;
}
.vs-a {
  margin-left: 28px;
}
.bridge {
  width: 32px;
  height: 32px;
  margin-left: 32px;
  background: #c2c2c2;
  color: #535353;
  font-size: 20px;
  font-weight: 700;
  line-height: 32px;
  text-align: center;
}
.bridge.st {
  margin-left: 40px;
}
.zoom {
  margin-left: 35px;
  font-size: 24px;
}
.ch-zoom {
  margin-left: 35px;
}
.vs-b {
  margin-left: 24px;
}
.scr {
  margin-left: 18px;
}
.ch-tb {
  margin-left: 14px;
}
.frm {
  margin-left: 30px;
}
.arr {
  margin-left: 28px;
}
.title-right {
  margin-left: auto;
  display: flex;
  align-items: center;
  padding-right: 6px;
}
.publish {
  width: 217px;
  height: 48px;
  box-sizing: border-box;
  display: flex;
  align-items: center;
  gap: 14px;
  padding-left: 19px;
  border: 3px solid #ededed;
  border-radius: 24px;
  font-size: 20px;
  white-space: nowrap;
  color: #f0f0f0;
}
.vs-c {
  margin-left: 12px;
}
.user {
  margin-left: 29px;
  font-size: 24px;
  font-family: "Liberation Sans", sans-serif;
}
.ch-user {
  margin-left: 21px;
}
.vs-d {
  margin-left: 28px;
}
.stock {
  width: 259px;
  height: 40px;
  margin-left: 18px;
  margin-top: -4px;
  box-sizing: border-box;
  display: flex;
  align-items: center;
  gap: 8px;
  padding-left: 6px;
  border: 2px solid #6a6a6a;
  border-radius: 6px;
  background: #474747;
  color: #8f8f8f;
  font-size: 20px;
}
.winbtns {
  align-self: flex-start;
  width: 206px;
  height: 37px;
  margin-left: 16px;
  display: flex;
  box-sizing: border-box;
  border: 2px solid #646464;
  border-top: 0;
  border-radius: 0 0 8px 8px;
}
.wb {
  display: flex;
  align-items: center;
  justify-content: center;
  border-right: 2px solid #646464;
}
.w-min {
  width: 55px;
}
.w-min i {
  width: 20px;
  height: 7px;
  margin-top: 8px;
  background: #bcbcbc;
}
.w-res {
  width: 52px;
}
.w-close {
  flex: 1;
  border: 0;
  color: #c0c0c0;
  font-size: 28px;
}

/* control panel */
.ctrl {
  flex: none;
  height: 122px;
  box-sizing: border-box;
  display: flex;
  border-top: 2px solid #3a3a3a;
  border-bottom: 2px solid #3c3c3c;
  padding-top: 12px;
  background: #535353;
}
.sec {
  flex: none;
  height: 94px;
  box-sizing: border-box;
  border-left: 2px solid #4a4a4a;
}
.row {
  height: 42px;
  display: flex;
  align-items: center;
}
.row + .row {
  margin-top: 10px;
}
.lbl {
  font-size: 19px;
  color: #ececec;
}
.sec-a {
  width: 100px;
  border-left: 0;
  display: flex;
  align-items: center;
  padding-left: 11px;
}
.grip-v {
  width: 3px;
  height: 40px;
  margin-top: 6px;
  background: repeating-linear-gradient(#3c3c3c 0 3px, transparent 3px 6px);
}
.col-a {
  width: 44px;
  margin-left: 28px;
}
.big-a {
  width: 44px;
  text-align: center;
  color: #c0c0c0;
  font-size: 30px;
}
.para-btn {
  width: 44px;
  height: 44px;
  border-radius: 6px;
  background: #2f2f2f;
  color: #c0c0c0;
  font-size: 26px;
  font-weight: 700;
  line-height: 42px;
  text-align: center;
}
.sec-b {
  width: 501px;
  padding-left: 6px;
}
.al {
  width: 44px;
  height: 44px;
  margin: -2px 5px 0;
  display: flex;
  align-items: center;
  justify-content: center;
  border-radius: 6px;
}
.al.on {
  background: #2f2f2f;
}
.row.row-b {
  height: 50px;
  margin: 4px 10px 0 7px;
  border-top: 2px solid #4b4b4b;
  padding-top: 4px;
  box-sizing: border-box;
}
.dir {
  width: 44px;
  height: 44px;
  border-radius: 6px;
  color: #c0c0c0;
  font-size: 25px;
  font-weight: 700;
  line-height: 42px;
  text-align: center;
  white-space: nowrap;
}
.dir.on {
  margin-left: 4px;
  background: #2f2f2f;
}
.kash {
  margin-left: 196px;
}
.select {
  box-sizing: border-box;
  height: 42px;
  display: flex;
  align-items: center;
  border: 2px solid #6a6a6a;
  border-radius: 6px;
  background: #454545;
  font-size: 19px;
}
.sel-none {
  width: 140px;
  margin-left: 4px;
  margin-top: 6px;
  padding: 0 8px;
  justify-content: space-between;
}
.fields {
  display: grid;
  grid-template-columns: repeat(2, 214px);
  grid-template-rows: 42px 42px;
  row-gap: 10px;
  column-gap: 11px;
  padding-left: 11px;
}
.sec-c {
  width: 464px;
}
.sec-d {
  width: 463px;
}
.fld {
  display: flex;
  align-items: center;
  gap: 8px;
}
.spin {
  flex: none;
  box-sizing: border-box;
  width: 173px;
  height: 42px;
  display: flex;
  border: 2px solid #6a6a6a;
  border-radius: 7px;
  background: #454545;
  overflow: hidden;
}
.arrows {
  flex: none;
  width: 32px;
  height: 100%;
  box-sizing: border-box;
  border-right: 2px solid #6a6a6a;
  display: flex;
  flex-direction: column;
  align-items: center;
  justify-content: space-evenly;
  background: #4c4c4c;
}
.arrows .chev {
  width: 14px;
  height: 9px;
}
.val {
  flex: 1;
  display: flex;
  align-items: center;
  box-sizing: border-box;
  padding: 1px 0 0 7px;
  font-size: 19px;
  line-height: 28px;
  white-space: nowrap;
}
.sec-e {
  width: 70px;
  padding-left: 20px;
}
.sec-f {
  width: 249px;
  padding-left: 13px;
}
.check {
  flex: none;
  width: 24px;
  height: 24px;
  box-sizing: border-box;
  border: 2px solid #c0c0c0;
  border-radius: 4px;
  margin-right: 12px;
}
.check.checked {
  background: #c0c0c0;
  display: flex;
  align-items: center;
  justify-content: center;
}
.shade-field {
  width: 140px;
  height: 38px;
  margin-left: 13px;
  display: flex;
  align-items: center;
  gap: 6px;
  padding-left: 7px;
  box-sizing: border-box;
  background: #e4e4e4;
  color: #8a8a8a;
  font-size: 19px;
}
.shade-field i {
  width: 23px;
  height: 24px;
  box-sizing: border-box;
  background: #3d99bd;
  border: 2px solid #222;
}
.shade-drop {
  width: 37px;
  height: 38px;
  display: flex;
  align-items: center;
  justify-content: center;
  background: #5c5c5c;
  border-radius: 0 4px 4px 0;
}
.shade-drop .ic {
  color: #858585;
}
.sec-g {
  width: 456px;
  padding-left: 29px;
}
.para-s {
  margin-right: 24px;
  color: #9c9c9c;
}
.sel-style {
  width: 364px;
  border-color: #6a6a6a;
  padding: 0;
}
.style-name {
  width: 324px;
  height: 100%;
  box-sizing: border-box;
  padding-left: 16px;
  background: #e4e4e4;
  color: #222;
  line-height: 36px;
}
.style-drop {
  flex: 1;
  display: flex;
  justify-content: center;
}
.row-hy {
  padding-left: 53px;
}
.para-x {
  margin-left: auto;
  margin-right: 11px;
}
.sec-h {
  width: 71px;
  padding-left: 13px;
}
.list-on {
  width: 44px;
  height: 44px;
  border-radius: 6px;
  background: #2f2f2f;
  display: flex;
  align-items: center;
  justify-content: center;
}
.sec-h .row + .row {
  padding-left: 8px;
}
.sec-i {
  width: 433px;
  padding-left: 12px;
}
.spin-i {
  margin-left: 14px;
}
.i-mid {
  margin-left: 14px;
}
.sel-bal {
  width: 138px;
  margin-left: 14px;
  padding: 0 8px;
  justify-content: space-between;
}
.span-x {
  width: 43px;
  display: flex;
  align-items: center;
  margin-left: 14px;
  color: #c0c0c0;
}
.span-x b {
  font-weight: 400;
  font-size: 18px;
}
.disabled {
  width: 138px;
  height: 42px;
  box-sizing: border-box;
  border-radius: 5px;
  background: #5b5b5b;
  color: #7c7c7c;
  padding-left: 8px;
  line-height: 44px;
}
.sec-gap {
  width: 22px;
}
.sec-j {
  width: 568px;
  padding-left: 9px;
}
.sel-font {
  width: 319px;
  position: relative;
  padding-left: 6px;
  flex: none;
}
.font-name {
  flex: 1;
  padding-left: 4px;
}
.font-name.regular {
  padding-left: 2px;
}
.sel-arrow {
  flex: none;
  width: 37px;
  height: 100%;
  box-sizing: border-box;
  border-left: 2px solid #6a6a6a;
  display: flex;
  align-items: center;
  justify-content: center;
}
.j-ic {
  margin-left: 12px;
}
.spin-size {
  margin-left: 6px;
}
.sec-k {
  width: 178px;
  padding-left: 16px;
  display: grid;
  grid-template-columns: 59px 57px 50px;
  grid-template-rows: 42px 42px;
  row-gap: 10px;
}
.tt {
  color: #c0c0c0;
  font-family: "Liberation Serif", serif;
  font-size: 31px;
  line-height: 42px;
  white-space: nowrap;
}
.tt sup,
.tt sub {
  font-size: 13px;
  line-height: 0;
}
.tt small {
  font-size: 24px;
}
.tt.under {
  text-decoration: underline;
  text-underline-offset: 4px;
}
.tt.strike {
  text-decoration: line-through;
}
.sec-l {
  width: 207px;
  display: flex;
  align-items: center;
  justify-content: flex-end;
  padding-right: 19px;
}
.sec-m {
  width: 58px;
  display: flex;
  flex-direction: column;
  align-items: center;
  gap: 36px;
  padding-top: 9px;
}

/* main area */
.main {
  flex: 1;
  min-height: 0;
  display: flex;
}
.tools {
  flex: none;
  width: 84px;
  box-sizing: border-box;
  border-left: 2px solid #474747;
  border-right: 6px solid #424242;
  display: flex;
  flex-direction: column;
  align-items: center;
}
.collapse {
  width: 100%;
  height: 24px;
  flex: none;
  box-sizing: border-box;
  border-bottom: 2px solid #3c3c3c;
  display: flex;
  align-items: center;
  padding-left: 12px;
  background: #4c4c4c;
}
.collapse.right {
  justify-content: flex-end;
  padding: 0 14px 0 0;
}
.grip {
  display: block;
  flex: none;
  width: 38px;
  height: 8px;
  margin: 7px auto 5px;
  background: repeating-linear-gradient(90deg, #363636 0 2px, transparent 2px 4px);
}
.tool-list {
  display: flex;
  flex-direction: column;
  align-items: center;
  margin-top: 8px;
}
.tool {
  position: relative;
  width: 56px;
  height: 48px;
  display: flex;
  align-items: center;
  justify-content: center;
}
.tool.gap {
  margin-top: 6px;
}
.tool.on::before {
  content: "";
  position: absolute;
  inset: 2px 0;
  border-radius: 6px;
  background: #2f2f2f;
}
.tool .ic {
  position: relative;
}
.fly::after {
  content: "";
  position: absolute;
  right: 3px;
  bottom: 5px;
  border-style: solid;
  border-width: 0 0 7px 7px;
  border-color: transparent transparent #c0c0c0 transparent;
}
.fillstroke {
  flex: none;
  margin-top: 10px;
  margin-left: 0;
}
.mode-row {
  width: 56px;
  display: flex;
  align-items: center;
  margin-top: 8px;
}
.mode {
  width: 28px;
  height: 24px;
  border-radius: 5px;
  background: #2f2f2f;
  display: flex;
  align-items: center;
  justify-content: center;
}
.mode i {
  width: 16px;
  height: 13px;
  border: 2px solid #c0c0c0;
}
.mode-t {
  margin-left: 10px;
  color: #c0c0c0;
  font-family: "Liberation Serif", serif;
  font-size: 24px;
  font-weight: 700;
  line-height: 24px;
}
.tool-box {
  position: relative;
  flex: none;
  width: 56px;
  height: 44px;
  margin-top: 14px;
  border-radius: 6px;
  background: #2f2f2f;
  display: flex;
  align-items: center;
  justify-content: center;
}
.work {
  flex: 1;
  min-width: 0;
  display: flex;
  flex-direction: column;
}
.tabs {
  flex: none;
  height: 58px;
  box-sizing: border-box;
  background: #424242;
}
.tab {
  width: 285px;
  height: 56px;
  box-sizing: border-box;
  display: flex;
  align-items: center;
  gap: 15px;
  padding-left: 30px;
  background: #535353;
  color: #f2f2f2;
  font-size: 22px;
  font-weight: 600;
  white-space: nowrap;
}
.tab em {
  font-style: normal;
  font-weight: 400;
  color: #d8d8d8;
  margin-top: -5px;
}
.work-row {
  flex: 1;
  min-height: 0;
  display: flex;
}
.doc {
  flex: 1;
  min-width: 0;
  display: flex;
  flex-direction: column;
}
.ruler-top {
  flex: none;
  height: 32px;
  display: flex;
  overflow: hidden;
  box-sizing: border-box;
  border-bottom: 2px solid #8a8a8a;
  background: #1e1e1e;
}
.corner {
  flex: none;
  width: 32px;
  background:
    repeating-linear-gradient(90deg, #9a9a9a 0 2px, transparent 2px 5px) 0 9px / 100% 2px no-repeat,
    repeating-linear-gradient(#9a9a9a 0 2px, transparent 2px 5px) 9px 0 / 2px 100% no-repeat;
}
.rt {
  flex: 0 0 83.333px;
  box-sizing: border-box;
  padding-left: 3px;
  color: #fff;
  font-family: "DejaVu Sans", sans-serif;
  font-size: 17px;
  line-height: 23px;
  background:
    linear-gradient(#a0a0a0, #a0a0a0) 0 0 / 1px 100% no-repeat,
    linear-gradient(#a0a0a0, #a0a0a0) 41.67px 100% / 1px 8px no-repeat,
    repeating-linear-gradient(90deg, #a0a0a0 0 1px, transparent 1px 8.333px) 0 100% / 100% 3px no-repeat;
}
.rt.rt-first {
  flex-basis: 69px;
}
.doc-body {
  flex: 1;
  min-height: 0;
  display: flex;
}
.ruler-left {
  flex: none;
  width: 32px;
  box-sizing: border-box;
  overflow: hidden;
  border-right: 2px solid #8a8a8a;
  background: #1e1e1e;
  display: flex;
  flex-direction: column;
}
.rl-top {
  flex: none;
  height: 11px;
}
.rl {
  flex: 0 0 83.333px;
  box-sizing: border-box;
  padding: 3px 0 0 4px;
  color: #fff;
  font-family: "DejaVu Sans", sans-serif;
  font-size: 17px;
  line-height: 17.5px;
  background:
    linear-gradient(#a0a0a0, #a0a0a0) 0 0 / 100% 1px no-repeat,
    linear-gradient(#a0a0a0, #a0a0a0) 100% 41.67px / 8px 1px no-repeat,
    repeating-linear-gradient(#a0a0a0 0 1px, transparent 1px 8.333px) 100% 0 / 3px 100% no-repeat;
}
.rl b {
  display: block;
  width: 11px;
  font-weight: 400;
  word-break: break-all;
}
.canvas {
  flex: 1;
  min-width: 0;
  display: flex;
  padding: 11px 569px 12px;
  box-sizing: border-box;
  background: #5d5d5d;
}
.page {
  flex: 1;
  display: flex;
  padding: 104px 105px 105px 104px;
  background: #fff;
  border: 1px solid #444;
  box-shadow: 4px 4px 0 #000;
}
.margins {
  flex: 1;
  border-style: solid;
  border-width: 2px;
  border-color: #f050f5 #ad50f0 #e860ea #ad50f0;
}
.vscroll {
  flex: none;
  width: 30px;
  display: flex;
  flex-direction: column;
  align-items: center;
  background: #454545;
  box-sizing: border-box;
  padding-top: 8px;
}
.thumb {
  flex: none;
  width: 28px;
  height: 1335px;
  margin-top: 219px;
  border-radius: 14px;
  background: #696969;
}
.vscroll .down {
  margin-top: auto;
  margin-bottom: 8px;
}
.status {
  flex: none;
  height: 35px;
  box-sizing: border-box;
  border-top: 2px solid #404040;
  display: flex;
  align-items: center;
  padding-left: 25px;
  background: #4a4a4a;
  font-size: 19px;
  white-space: nowrap;
}
.st-prev {
  margin-left: 28px;
}
.page-field {
  width: 181px;
  height: 30px;
  margin-left: 26px;
  box-sizing: border-box;
  display: flex;
  justify-content: space-between;
  border: 2px solid #6a6a6a;
  border-radius: 6px;
  background: #424242;
  padding-left: 6px;
  line-height: 26px;
}
.page-field b {
  width: 36px;
  box-sizing: border-box;
  border-left: 2px solid #6a6a6a;
  display: flex;
  align-items: center;
  justify-content: center;
}
.st-next {
  margin-left: 28px;
}
.st-last {
  margin-left: 29px;
}
.st-pf {
  margin-left: 34px;
}
.st-prof {
  width: 205px;
  margin-left: 31px;
}
.st-ch1 {
  margin-left: 0;
}
.dot {
  flex: none;
  width: 20px;
  height: 20px;
  margin-left: 34px;
  border-radius: 50%;
  background: #3fa648;
}
.st-err {
  width: 127px;
  margin-left: 11px;
}
.st-left {
  margin-left: 22px;
}
.hthumb {
  flex: none;
  width: 1282px;
  height: 30px;
  margin-left: 689px;
  margin-top: 2px;
  border-radius: 0 15px 15px 0;
  background: #696969;
}
.st-right {
  margin-left: 692px;
}
.st-split {
  margin-left: 19px;
}
.st-grip {
  flex: none;
  width: 20px;
  height: 20px;
  margin-left: 11px;
  background: repeating-linear-gradient(90deg, #6c6c6c 0 2px, transparent 2px 4px);
}
.rpanel {
  flex: none;
  width: 82px;
  box-sizing: border-box;
  border-left: 6px solid #424242;
  display: flex;
  flex-direction: column;
}
.rp-sec {
  flex: none;
  box-sizing: border-box;
  padding: 0 0 6px;
  border-bottom: 2px solid #3e3e3e;
  display: flex;
  flex-direction: column;
}
.rp-sec .grip {
  margin: 4px auto 5px;
}
.rp-sec.first .grip {
  margin: 7px auto 5px;
}
.rp-sec.last .grip {
  margin-top: 8px;
}
.rp-ic {
  height: 56px;
  display: flex;
  align-items: center;
  justify-content: center;
}

/* taskbar */
.taskbar {
  flex: none;
  height: 80px;
  display: flex;
  align-items: center;
  background: #03050a;
  color: #f4f4f4;
  font-size: 22px;
  position: relative;
}
.tb-note {
  flex: none;
  margin-left: 50px;
}
.clock {
  width: 122px;
  margin-left: 37px;
  display: flex;
  flex-direction: column;
  align-items: center;
  gap: 13px;
  font-size: 22px;
  line-height: 24px;
}
.lang {
  margin-left: 28px;
  font-family: "Liberation Sans", sans-serif;
  font-size: 24px;
}
.tb-vol {
  flex: none;
  margin-left: 24px;
}
.tb-caret {
  flex: none;
  margin-left: 19px;
}
.tb-apps {
  margin-left: auto;
  height: 100%;
  display: flex;
}
.app-cell {
  position: relative;
  width: 98px;
  height: 100%;
  display: flex;
  align-items: center;
  justify-content: center;
}
.app-cell.active {
  background: #33363c;
}
.app-cell.used::after {
  content: "";
  position: absolute;
  left: 8px;
  right: 8px;
  bottom: 0;
  height: 4px;
  background: #8ce8ee;
}
.app-cell.active::after {
  left: 0;
  right: 0;
}
.nudge-ie {
  padding-left: 8px;
  box-sizing: border-box;
}
.nudge-tv {
  padding-left: 12px;
  box-sizing: border-box;
}
.nudge-se {
  padding-left: 8px;
  box-sizing: border-box;
}
.chrome {
  width: 44px;
  height: 44px;
  border-radius: 50%;
  background:
    radial-gradient(circle, #5a9af0 0 7px, #fff 8px 10px, transparent 11px),
    conic-gradient(#e0483a 0deg 120deg, #f8c93c 120deg 225deg, #2f9e52 225deg 300deg, #e0483a 300deg);
}
.adobe {
  box-sizing: border-box;
  width: 45px;
  height: 44px;
  border-style: solid;
  border-width: 4px 1px;
  font-size: 26px;
  line-height: 34px;
  text-align: center;
}
.adobe.br {
  color: #f7a600;
  border-color: #d48a00;
  background: #2c1f00;
}
.adobe.mu {
  color: #b0d800;
  border-color: #94b800;
  background: #262c00;
}
.adobe.id {
  color: #ff3d83;
  border-color: #e8306e;
  background: #2b0016;
}
.adobe.ai {
  color: #ff7f18;
  border-color: #e06f10;
  background: #2c1400;
}
.adobe.ps {
  color: #16c4f5;
  border-color: #10a8d6;
  background: #001c26;
}
.w-txt {
  fill: #fff;
  font-family: "Liberation Sans", sans-serif;
}
.ie-txt {
  fill: #5fd4f6;
  font-family: "Liberation Sans", sans-serif;
  font-weight: 700;
}

/* overlays */
.tooltip {
  position: absolute;
  left: 51px;
  top: 525px;
  width: 155px;
  height: 35px;
  box-sizing: border-box;
  border: 1px solid #8a8a8a;
  background: #fff;
  box-shadow: 2px 2px 2px rgba(0, 0, 0, 0.45);
  color: #555;
  font-family: "DejaVu Sans", sans-serif;
  font-size: 22px;
  line-height: 33px;
  text-align: center;
  white-space: nowrap;
}
.stamp {
  position: absolute;
  left: 45px;
  top: 1772px;
  pointer-events: none;
}
.stamp-he {
  font-family: "Liberation Sans", sans-serif;
  font-weight: 700;
}
.stamp-main {
  font-family: "Open Sans", sans-serif;
}
</style>
